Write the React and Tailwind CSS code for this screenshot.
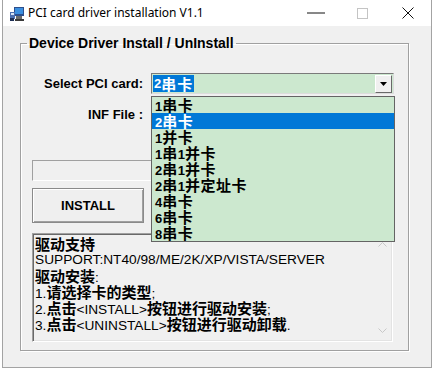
import React from "react";

const CJK = /([\u3000-\u303f\u3400-\u9fff\uff00-\uffef]+)/;

// split a line into latin / CJK runs so the CJK runs can get their own font
function Mixed({ text, cjk }) {
  return text.split(CJK).map((part, i) =>
    i % 2 ? (
      <span key={i} className={cjk}>
        {part}
      </span>
    ) : (
      <React.Fragment key={i}>{part}</React.Fragment>
    )
  );
}

const cards = ["1串卡", "2串卡", "1并卡", "1串1并卡", "2串1并卡", "2串1并定址卡", "4串卡", "6串卡", "8串卡"];

const notes = [
  "驱动支持",
  "SUPPORT:NT40/98/ME/2K/XP/VISTA/SERVER",
  "驱动安装:",
  "1.请选择卡的类型;",
  "2.点击<INSTALL>按钮进行驱动安装;",
  "3.点击<UNINSTALL>按钮进行驱动卸载.",
];

function AppIcon() {
  return (
    <svg width="16" height="16" viewBox="0 0 16 16">
      <rect x="5" y="1" width="10" height="9" fill="#2d4f8c" />
      <rect x="6" y="2" width="8" height="6" fill="#3b8fe0" />
      <rect x="7" y="10" width="6" height="3" fill="#6b6b6b" />
      <rect x="6" y="13" width="9" height="2" fill="#3a3a3a" />
      <rect x="1" y="6" width="5" height="7" fill="#4c6fb0" />
      <rect x="2" y="7" width="3" height="2" fill="#d8e4f5" />
      <rect x="1" y="12" width="4" height="3" fill="#1e2f55" />
    </svg>
  );
}

export default function App() {
  return (
    <div className="w-[434px] h-[371px] bg-white font-['Liberation_Sans',sans-serif] text-black">
      <div className="ml-[2px] w-[430px] h-[368px] border border-[#a3a3a3] border-t-0 flex flex-col">
        {/* TITLE BAR */}
        <div className="h-[26px] bg-white flex items-center">
          <div className="ml-[6px] mt-[1px]">
            <AppIcon />
          </div>
          <span className="ml-[3px] text-[12px] font-['Noto_Sans',sans-serif] leading-[16px]">
            PCI card driver installation V1.1
          </span>
          <div className="ml-auto flex h-full">
            <div className="w-[46px] flex items-center justify-center">
              <svg width="18" height="2" viewBox="0 0 18 2">
                <line x1="0" y1="1" x2="18" y2="1" stroke="#111" strokeWidth="1" />
              </svg>
            </div>
            <div className="w-[46px] flex items-center justify-center">
              <svg width="11" height="11" viewBox="0 0 11 11">
                <rect x="0.5" y="0.5" width="10" height="10" fill="none" stroke="#c4c4c4" />
              </svg>
            </div>
            <div className="w-[46px] flex items-center justify-center">
              <svg width="12" height="12" viewBox="0 0 12 12">
                <path d="M0.5 0.5 L11.5 11.5 M11.5 0.5 L0.5 11.5" stroke="#111" strokeWidth="1" />
              </svg>
            </div>
          </div>
        </div>

        {/* BODY */}
        <div className="flex-1 bg-[#f0f0f0] relative pl-[17px] pt-[9px]">
          <fieldset className="w-[389px] h-[316px] border border-[#a0a0a0] shadow-[inset_1px_1px_0_#fff,1px_1px_0_#fff]">
            <legend className="ml-[6px] px-[2px] text-[14px] font-bold leading-[16px]">
              Device Driver Install / UnInstall
            </legend>

            <div className="mt-[22px] flex items-center h-[21px]">
              <div className="w-[122px] text-right text-[13px] font-bold">Select PCI card:</div>
              <div className="ml-[8px] w-[243px] h-[21px] border border-t-[#7a7a7a] border-l-[#7a7a7a] border-b-[#dcdcdc] border-r-[#dcdcdc] bg-[#cce8cf] flex items-center pl-[1px]">
                <span className="h-[17px] px-[1px] bg-[#0078d7] text-white text-[13px] font-bold leading-[17px] flex items-center">
                  <Mixed text="2串卡" cjk="inline-block leading-[16px] font-['Noto_Sans_CJK_SC'] text-[15px] tracking-[1px]" />
                </span>
                <div className="ml-auto mr-[1px] w-[17px] h-[18px] bg-[#f0f0f0] border border-t-white border-l-white border-b-[#696969] border-r-[#696969] flex items-center justify-center">
                  <svg width="7" height="4" viewBox="0 0 7 4">
                    <path d="M0 0 H7 L3.5 4 Z" fill="#000" />
                  </svg>
                </div>
              </div>
            </div>

            <div className="mt-[10px] flex items-center h-[21px]">
              <div className="w-[122px] text-right text-[13px] font-bold">INF File :</div>
              <div className="ml-[8px] w-[243px] h-[21px] border border-[#7a7a7a] bg-white" />
            </div>

            <div className="mt-[35px] ml-[11px] w-[361px] h-[21px] border border-t-[#a0a0a0] border-l-[#a0a0a0] border-b-white border-r-white" />

            <div className="mt-[7px] ml-[11px] w-[361px] flex">
              <button className="w-[112px] h-[35px] bg-[#efefef] border border-[#8a8a8a] shadow-[inset_1px_1px_0_#fff,inset_-1px_-1px_0_#a0a0a0] text-[13px] font-bold">
                INSTALL
              </button>
            </div>

            <div className="mt-[10px] ml-[11px] w-[361px] h-[109px] flex border border-t-[#a0a0a0] border-l-[#a0a0a0] border-b-white border-r-white shadow-[inset_1px_1px_0_#696969,inset_-1px_-1px_0_#e3e3e3]">
              <div className="flex-1 pl-[2px] pt-[2px] text-[13.7px]">
                {notes.map((line) => (
                  <div key={line} className="h-[16px] leading-[16px] whitespace-nowrap">
                    <Mixed text={line} cjk="inline-block leading-[16px] font-['Noto_Sans_CJK_SC'] font-bold text-[15px]" />
                  </div>
                ))}
              </div>
              <div className="w-[17px] mr-[1px] flex flex-col justify-between items-center py-[8px]">
                <svg width="9" height="5" viewBox="0 0 9 5">
                  <path d="M0.5 4.5 L4.5 0.5 L8.5 4.5" fill="none" stroke="#c8c8c8" />
                </svg>
                <svg width="9" height="5" viewBox="0 0 9 5">
                  <path d="M0.5 0.5 L4.5 4.5 L8.5 0.5" fill="none" stroke="#c8c8c8" />
                </svg>
              </div>
            </div>
          </fieldset>

          {/* DROPDOWN LIST (open) */}
          <div className="absolute left-[148px] top-[70px] w-[244px] border border-[#646464] bg-[#cce8cf]">
            {cards.map((c) => (
              <div
                key={c}
                className={`h-[16px] leading-[16px] pl-[3px] text-[13px] font-bold whitespace-nowrap ${
                  c === "2串卡" ? "bg-[#0078d7] text-white" : "text-black"
                }`}
              >
                <Mixed text={c} cjk="inline-block leading-[16px] font-['Noto_Sans_CJK_SC'] text-[15px] tracking-[0.5px]" />
              </div>
            ))}
          </div>
        </div>
      </div>
    </div>
  );
}
